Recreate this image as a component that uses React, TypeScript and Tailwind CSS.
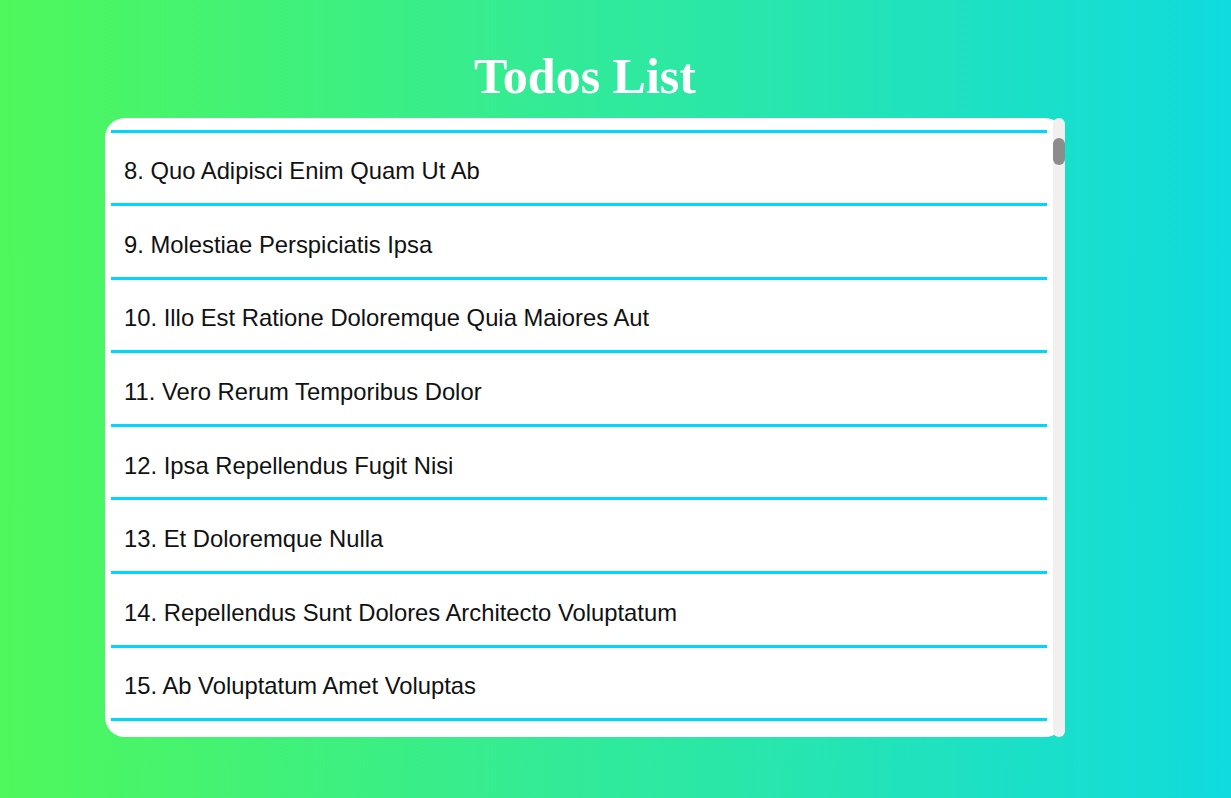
import React from "react";

const todos: [number, string][] = [
  [8, "Quo Adipisci Enim Quam Ut Ab"],
  [9, "Molestiae Perspiciatis Ipsa"],
  [10, "Illo Est Ratione Doloremque Quia Maiores Aut"],
  [11, "Vero Rerum Temporibus Dolor"],
  [12, "Ipsa Repellendus Fugit Nisi"],
  [13, "Et Doloremque Nulla"],
  [14, "Repellendus Sunt Dolores Architecto Voluptatum"],
  [15, "Ab Voluptatum Amet Voluptas"],
];

export default function App() {
  return (
    <div className="h-[798px] w-full overflow-hidden bg-[linear-gradient(to_right,#4ff85b,#10dbde)]">
      <div className="ml-[105px] w-[960px] pt-[46px]">
        <h1 className="text-center text-[50px] font-bold leading-[61px] text-white [font-family:'Liberation_Serif',serif]">
          Todos List
        </h1>
        <div className="relative mt-[11px] h-[619px]">
          <div className="h-full overflow-hidden rounded-[20px] bg-white pl-[6px] pr-[18px] pt-[11.5px]">
            <div className="border-b-[3px] border-[#00d6ff]">
              {todos.map(([n, t]) => (
                <div
                  key={n}
                  className="h-[73.6px] border-t-[3px] border-[#00d6ff] pl-[13px] pt-[24.7px] text-[23.8px] leading-[27px] text-[#111] [font-family:'Liberation_Sans',Arial,sans-serif]"
                >
                  {n}. {t}
                </div>
              ))}
            </div>
          </div>
          <div className="absolute bottom-0 right-0 top-0 w-[12px] rounded-full bg-[#f0f0f0]">
            <div className="absolute left-0 top-[20px] h-[27px] w-[12px] rounded-full bg-[#8c8c8c]" />
          </div>
        </div>
      </div>
    </div>
  );
}
